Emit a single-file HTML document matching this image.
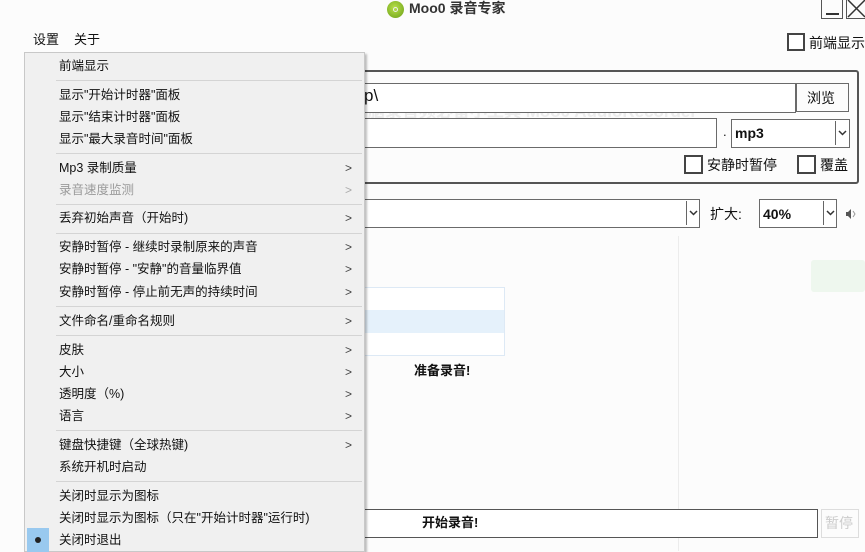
<!DOCTYPE html>
<html><head><meta charset="utf-8"><style>
*{margin:0;padding:0;box-sizing:border-box}
body{width:865px;height:551px;overflow:hidden;background:#fcfcfc;position:relative;font-family:"Liberation Sans","Noto Sans CJK SC",sans-serif;font-size:13px;color:#111}
.a{position:absolute}
.box{position:absolute;border:1px solid #6a6a6a;background:#fff}
.t{position:absolute;white-space:nowrap;line-height:16px}
.menu{position:absolute;left:24px;top:52px;width:341px;height:500px;background:#f0f0f0;border:1px solid #c8c8c8;box-shadow:2px 2px 2px rgba(0,0,0,.25)}
.mi{position:absolute;left:34px;white-space:nowrap;font-size:12.5px;line-height:16px}
.ar{position:absolute;left:320px;font-size:12px;color:#444;line-height:16px}
.sep{position:absolute;left:31px;width:306px;height:1px;background:#d4d4d4}
.cb{position:absolute;width:19px;height:19px;border:2px solid #444;background:#fff}
.dd{position:absolute;width:1px;background:#666}
.ch{position:absolute}
</style></head><body>
<!-- title -->
<div class="a" style="left:387px;top:1px;width:17px;height:17px;border-radius:50%;background:radial-gradient(circle at 45% 40%,#b8e04a,#6a9e16)"></div>
<div class="a" style="left:393px;top:7px;width:5px;height:5px;border-radius:50%;border:1px solid #eee"></div>
<div class="t" style="left:409px;top:0px;font-size:14px;font-weight:bold;color:#333">Moo0 录音专家</div>
<div class="a" style="left:821px;top:0;width:22px;height:19px;border:1px solid #555;border-top:none"></div>
<div class="a" style="left:826px;top:13px;width:13px;height:2px;background:#333"></div>
<div class="a" style="left:846px;top:0;width:20px;height:19px;border:1px solid #555;border-top:none;border-right:none"></div>
<svg class="a" style="left:846px;top:0" width="19" height="19"><path d="M2 0L19 17M19 0L2 17" stroke="#333" stroke-width="1.5"/></svg>
<!-- menubar -->
<div class="t" style="left:33px;top:32px">设置</div>
<div class="t" style="left:74px;top:32px">关于</div>
<div class="cb" style="left:787px;top:33px;width:18px;height:18px"></div>
<div class="t" style="left:809px;top:35px;font-size:14px">前端显示</div>
<!-- faded -->
<div class="t" style="left:368px;top:104px;font-size:17px;font-weight:bold;color:#ececec">脑录音频必备小工具 Moo0 AudioRecorder</div>
<!-- group -->
<div class="a" style="left:340px;top:70px;width:519px;height:114px;border:2px solid #555;border-radius:3px"></div>
<div class="box" style="left:340px;top:83px;width:456px;height:30px"></div>
<div class="t" style="left:364px;top:88px;font-size:17px">p\</div>
<div class="box" style="left:796px;top:83px;width:53px;height:29px;background:#fcfcfc"></div>
<div class="t" style="left:807px;top:90px;font-size:14px">浏览</div>
<div class="box" style="left:340px;top:118px;width:377px;height:30px"></div>
<div class="t" style="left:723px;top:124px">.</div>
<div class="box" style="left:731px;top:119px;width:119px;height:29px"></div>
<div class="t" style="left:735px;top:125px;font-weight:bold;font-size:14px">mp3</div>
<div class="dd" style="left:835px;top:121px;height:24px"></div>
<svg class="ch" style="left:838px;top:130px" width="9" height="6"><path d="M1 1L4.5 4.5L8 1" stroke="#333" stroke-width="1.5" fill="none"/></svg>
<div class="cb" style="left:684px;top:155px"></div>
<div class="t" style="left:707px;top:157px;font-size:14px">安静时暂停</div>
<div class="cb" style="left:797px;top:155px"></div>
<div class="t" style="left:820px;top:157px;font-size:14px">覆盖</div>
<!-- row -->
<div class="box" style="left:340px;top:199px;width:360px;height:29px"></div>
<div class="dd" style="left:686px;top:201px;height:24px"></div>
<svg class="ch" style="left:689px;top:210px" width="9" height="6"><path d="M1 1L4.5 4.5L8 1" stroke="#333" stroke-width="1.5" fill="none"/></svg>
<div class="t" style="left:710px;top:206px;font-size:14px">扩大:</div>
<div class="box" style="left:759px;top:199px;width:78px;height:29px"></div>
<div class="t" style="left:763px;top:206px;font-weight:bold;font-size:14px">40%</div>
<div class="dd" style="left:823px;top:201px;height:24px"></div>
<svg class="ch" style="left:826px;top:210px" width="9" height="6"><path d="M1 1L4.5 4.5L8 1" stroke="#333" stroke-width="1.5" fill="none"/></svg>
<svg class="ch" style="left:845px;top:208px" width="12" height="12"><path d="M1 4H3L6 1V11L3 8H1Z" fill="#555"/><path d="M8 3L10 6L8 9" stroke="#999" fill="none"/></svg>
<div class="a" style="left:811px;top:260px;width:54px;height:32px;background:#eef7ee;border-radius:3px"></div>
<div class="a" style="left:678px;top:236px;width:1px;height:315px;background:#ececec"></div>
<div class="a" style="left:340px;top:287px;width:165px;height:69px;background:#fff;border:1px solid #dde9f5"></div>
<div class="a" style="left:341px;top:310px;width:163px;height:23px;background:#e5f1fb"></div>
<div class="t" style="left:414px;top:363px;font-weight:bold">准备录音!</div>
<div class="a" style="left:340px;top:509px;width:478px;height:29px;border:1px solid #555;background:#fff"></div>
<div class="t" style="left:422px;top:515px;font-weight:bold">开始录音!</div>
<div class="a" style="left:821px;top:509px;width:38px;height:29px;border:1px solid #ddd"></div>
<div class="t" style="left:825px;top:515px;color:#ccc;font-size:14px">暂停</div>
<!-- menu -->
<div class="menu">
<div class="mi" style="top:5px">前端显示</div>
<div class="sep" style="top:27px"></div>
<div class="mi" style="top:34px">显示"开始计时器"面板</div>
<div class="mi" style="top:56px">显示"结束计时器"面板</div>
<div class="mi" style="top:78px">显示"最大录音时间"面板</div>
<div class="sep" style="top:100px"></div>
<div class="mi" style="top:107px">Mp3 录制质量</div><div class="ar" style="top:107px">&gt;</div>
<div class="mi" style="top:129px;color:#9a9a9a">录音速度监测</div><div class="ar" style="top:129px;color:#aaa">&gt;</div>
<div class="sep" style="top:151px"></div>
<div class="mi" style="top:157px">丢弃初始声音（开始时)</div><div class="ar" style="top:157px">&gt;</div>
<div class="sep" style="top:180px"></div>
<div class="mi" style="top:186px">安静时暂停 - 继续时录制原来的声音</div><div class="ar" style="top:186px">&gt;</div>
<div class="mi" style="top:208px">安静时暂停 - "安静"的音量临界值</div><div class="ar" style="top:208px">&gt;</div>
<div class="mi" style="top:231px">安静时暂停 - 停止前无声的持续时间</div><div class="ar" style="top:231px">&gt;</div>
<div class="sep" style="top:253px"></div>
<div class="mi" style="top:260px">文件命名/重命名规则</div><div class="ar" style="top:260px">&gt;</div>
<div class="sep" style="top:282px"></div>
<div class="mi" style="top:289px">皮肤</div><div class="ar" style="top:289px">&gt;</div>
<div class="mi" style="top:311px">大小</div><div class="ar" style="top:311px">&gt;</div>
<div class="mi" style="top:333px">透明度（%)</div><div class="ar" style="top:333px">&gt;</div>
<div class="mi" style="top:355px">语言</div><div class="ar" style="top:355px">&gt;</div>
<div class="sep" style="top:377px"></div>
<div class="mi" style="top:384px">键盘快捷键（全球热键)</div><div class="ar" style="top:384px">&gt;</div>
<div class="mi" style="top:406px">系统开机时启动</div>
<div class="sep" style="top:428px"></div>
<div class="mi" style="top:435px">关闭时显示为图标</div>
<div class="mi" style="top:457px">关闭时显示为图标（只在"开始计时器"运行时)</div>
<div class="a" style="left:2px;top:475px;width:22px;height:24px;background:#99c9ef"></div>
<div class="a" style="left:10px;top:484px;width:6px;height:6px;border-radius:50%;background:#222"></div>
<div class="mi" style="top:479px">关闭时退出</div>
</div>
</body></html>
